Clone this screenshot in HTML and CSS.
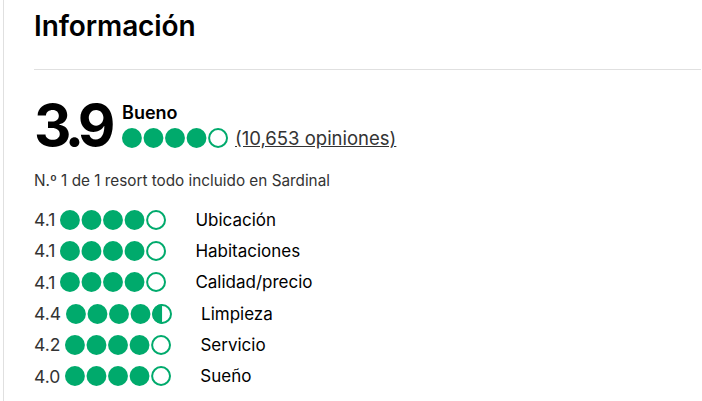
FILE: index.html
```html
<!DOCTYPE html>
<html lang="es">
<head>
<meta charset="utf-8">
<link rel="stylesheet" href="styles.css">
</head>
<body>
<div class="panel">
  <h2 class="title">Información</h2>
  <hr class="rule">
  <div class="summary">
    <div class="big">3.9</div>
    <div class="side">
      <div class="verdict">Bueno</div>
      <div class="side-row">
        <svg class="bubbles" viewBox="0 0 128 24"><circle cx="12" cy="12" r="12" fill="#00aa6c"/><circle cx="38" cy="12" r="12" fill="#00aa6c"/><circle cx="64" cy="12" r="12" fill="#00aa6c"/><circle cx="90" cy="12" r="12" fill="#00aa6c"/><circle cx="116" cy="12" r="10.8" fill="none" stroke="#00aa6c" stroke-width="2.4"/></svg>
        <a class="count" href="#">(10,653 opiniones)</a>
      </div>
    </div>
  </div>
  <p class="rank">N.º 1 de 1 resort todo incluido en Sardinal</p>
  <ul class="subs">
    <li class="sub"><span class="num">4.1</span><svg class="bubbles" viewBox="0 0 128 24"><circle cx="12" cy="12" r="12" fill="#00aa6c"/><circle cx="38" cy="12" r="12" fill="#00aa6c"/><circle cx="64" cy="12" r="12" fill="#00aa6c"/><circle cx="90" cy="12" r="12" fill="#00aa6c"/><circle cx="116" cy="12" r="10.8" fill="none" stroke="#00aa6c" stroke-width="2.4"/></svg><span class="name">Ubicación</span></li>
    <li class="sub"><span class="num">4.1</span><svg class="bubbles" viewBox="0 0 128 24"><circle cx="12" cy="12" r="12" fill="#00aa6c"/><circle cx="38" cy="12" r="12" fill="#00aa6c"/><circle cx="64" cy="12" r="12" fill="#00aa6c"/><circle cx="90" cy="12" r="12" fill="#00aa6c"/><circle cx="116" cy="12" r="10.8" fill="none" stroke="#00aa6c" stroke-width="2.4"/></svg><span class="name">Habitaciones</span></li>
    <li class="sub"><span class="num">4.1</span><svg class="bubbles" viewBox="0 0 128 24"><circle cx="12" cy="12" r="12" fill="#00aa6c"/><circle cx="38" cy="12" r="12" fill="#00aa6c"/><circle cx="64" cy="12" r="12" fill="#00aa6c"/><circle cx="90" cy="12" r="12" fill="#00aa6c"/><circle cx="116" cy="12" r="10.8" fill="none" stroke="#00aa6c" stroke-width="2.4"/></svg><span class="name">Calidad/precio</span></li>
    <li class="sub"><span class="num">4.4</span><svg class="bubbles" viewBox="0 0 128 24"><circle cx="12" cy="12" r="12" fill="#00aa6c"/><circle cx="38" cy="12" r="12" fill="#00aa6c"/><circle cx="64" cy="12" r="12" fill="#00aa6c"/><circle cx="90" cy="12" r="12" fill="#00aa6c"/><path d="M116 0 A12 12 0 0 0 116 24 Z" fill="#00aa6c"/><circle cx="116" cy="12" r="10.8" fill="none" stroke="#00aa6c" stroke-width="2.4"/></svg><span class="name">Limpieza</span></li>
    <li class="sub"><span class="num">4.2</span><svg class="bubbles" viewBox="0 0 128 24"><circle cx="12" cy="12" r="12" fill="#00aa6c"/><circle cx="38" cy="12" r="12" fill="#00aa6c"/><circle cx="64" cy="12" r="12" fill="#00aa6c"/><circle cx="90" cy="12" r="12" fill="#00aa6c"/><circle cx="116" cy="12" r="10.8" fill="none" stroke="#00aa6c" stroke-width="2.4"/></svg><span class="name">Servicio</span></li>
    <li class="sub"><span class="num">4.0</span><svg class="bubbles" viewBox="0 0 128 24"><circle cx="12" cy="12" r="12" fill="#00aa6c"/><circle cx="38" cy="12" r="12" fill="#00aa6c"/><circle cx="64" cy="12" r="12" fill="#00aa6c"/><circle cx="90" cy="12" r="12" fill="#00aa6c"/><circle cx="116" cy="12" r="10.8" fill="none" stroke="#00aa6c" stroke-width="2.4"/></svg><span class="name">Sueño</span></li>
  </ul>
</div>
</body>
</html>
```

FILE: styles.css
```css
html, body {
  margin: 0;
  padding: 0;
  background: #fff;
}
body {
  font-family: Inter, "Noto Sans", sans-serif;
  color: #000;
}
.panel {
  margin-left: 3px;
  min-height: 401px;
  box-sizing: border-box;
  border-left: 1px solid #e0e0e0;
  padding: 0 1px 0 30px;
}
.title {
  margin: 0;
  padding-top: 8px;
  font-size: 28px;
  line-height: 36px;
  font-weight: 600;
  letter-spacing: -0.1px;
}
.rule {
  margin: 25px 0 0 0;
  border: 0;
  border-top: 1px solid #e0e0e0;
  height: 0;
}
.summary {
  display: flex;
  align-items: flex-start;
  margin-top: 23px;
  gap: 12px;
}
.big {
  font-size: 58px;
  line-height: 64px;
  font-weight: 700;
  letter-spacing: -5.5px;
}
.side {
  display: flex;
  flex-direction: column;
  padding-top: 9px;
}
.verdict {
  font-size: 18px;
  line-height: 22px;
  font-weight: 600;
}
.side-row {
  display: flex;
  align-items: center;
  gap: 7px;
  margin-top: 2px;
}
.bubbles {
  width: 106px;
  height: 20px;
  flex: none;
}
.count {
  color: #333;
  font-size: 18.5px;
  line-height: 24px;
  text-decoration: underline;
}
.rank {
  margin: 14px 0 0 0;
  font-size: 15.3px;
  line-height: 20px;
  color: #333;
}
.subs {
  list-style: none;
  margin: 13px 0 0 0;
  padding: 0;
}
.sub {
  display: flex;
  align-items: center;
  height: 31.3px;
}
.num {
  font-size: 17.5px;
  margin-right: 5px;
  color: #333;
}
.name {
  margin-left: 29px;
  font-size: 17px;
  color: #000;
}
```
